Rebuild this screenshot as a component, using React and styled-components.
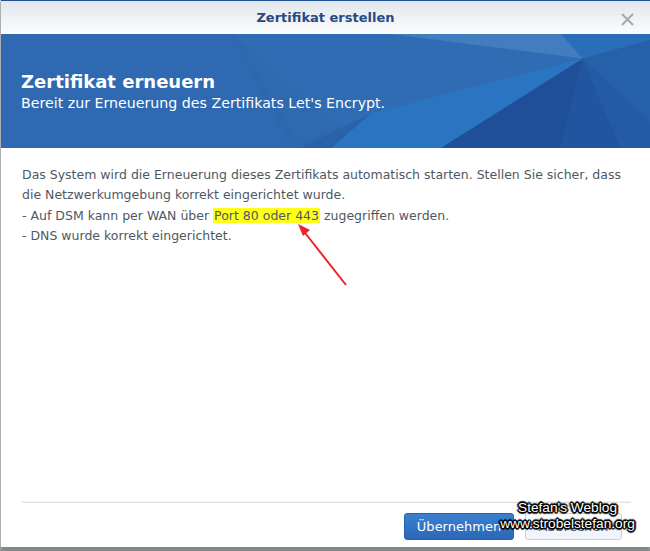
import styled, { createGlobalStyle } from "styled-components";

const GlobalStyle = createGlobalStyle`
  html, body {
    margin: 0;
    padding: 0;
    background: #9da1a6;
    overflow: hidden;
  }
  #root {
    width: 650px;
    height: 551px;
  }
`;

const uiFont = `"DejaVu Sans", Verdana, sans-serif`;

const Page = styled.div`
  width: 650px;
  height: 551px;
  padding-left: 1px;
  box-sizing: border-box;
  background: linear-gradient(to bottom, #c9ccd0 0, #c9ccd0 545px, #8d9196 551px);
`;

const Dialog = styled.div`
  position: relative;
  width: 649px;
  height: 547px;
  background: #fff;
  display: flex;
  flex-direction: column;
  box-shadow: 0 2px 4px rgba(0, 0, 0, 0.35);
  font-family: ${uiFont};
`;

const TitleBar = styled.div`
  height: 33px;
  flex: none;
  border-top: 1px solid #1f5190;
  background: linear-gradient(to bottom, #e1e7ee, #fbfcfd);
  display: flex;
  align-items: center;
  justify-content: center;
  position: relative;
`;

const TitleText = styled.div`
  font-size: 13px;
  font-weight: bold;
  color: #264a7e;
`;

const CloseButton = styled.div`
  position: absolute;
  right: 16px;
  top: 10px;
  width: 13px;
  height: 13px;
`;

const Banner = styled.div`
  position: relative;
  height: 112px;
  flex: none;
  background: #2e69b1;
  overflow: hidden;
  display: flex;
  flex-direction: column;
  justify-content: center;
  padding: 2px 16px 0 20px;
  color: #fff;
`;

const BannerArt = styled.svg`
  position: absolute;
  inset: 0;
  width: 100%;
  height: 100%;
`;

const BannerTitle = styled.div`
  position: relative;
  font-size: 18px;
  font-weight: bold;
  line-height: 22px;
`;

const BannerSub = styled.div`
  position: relative;
  font-size: 14.2px;
  line-height: 20px;
`;

const Body = styled.div`
  flex: 1;
  padding: 17px 21px 0;
  font-size: 12.5px;
  line-height: 20.3px;
  color: #4e5863;
`;

const Line = styled.div`
  white-space: nowrap;
`;

const Mark = styled.span`
  background: #ffff1a;
  padding: 0 1px;
`;

const Footer = styled.div`
  flex: none;
  margin: 0 19px 0 21px;
  border-top: 1px solid #e2e2e2;
  box-shadow: 0 -1px 0 #f2f2f2;
  height: 34px;
  display: flex;
  justify-content: flex-end;
  align-items: flex-start;
  gap: 11px;
  padding-top: 10px;
  padding-right: 9px;
`;

const Button = styled.button`
  height: 27px;
  width: ${({ $w }) => $w}px;
  border-radius: 3px;
  font-family: ${uiFont};
  font-size: 13px;
  padding: 0;
  border: 1px solid ${({ $primary }) => ($primary ? "#2761aa" : "#c3d2e2")};
  color: ${({ $primary }) => ($primary ? "#fff" : "#3f5f8a")};
  background: ${({ $primary }) =>
    $primary
      ? "linear-gradient(to bottom, #3b80d0, #2b67b6)"
      : "linear-gradient(to bottom, #fbfcfe, #eef3f9)"};
`;

const Watermark = styled.div`
  position: absolute;
  left: 497px;
  top: 500px;
  width: 139px;
  text-align: center;
  font-family: "Liberation Sans", Arial, sans-serif;
  font-size: 13.7px;
  line-height: 16px;
  color: #fff;
  text-shadow: -1px -1px 0 #000, 1px -1px 0 #000, -1px 1px 0 #000, 1px 1px 0 #000,
    0 -2px 1px #000, 0 2px 1px #000, -2px 0 1px #000, 2px 0 1px #000;
`;

const Arrow = styled.svg`
  position: absolute;
  left: 285px;
  top: 215px;
  width: 70px;
  height: 80px;
  overflow: visible;
`;

export default function App() {
  return (
    <>
      <GlobalStyle />
      <Page>
        <Dialog>
          <TitleBar>
            <TitleText>Zertifikat erstellen</TitleText>
            <CloseButton>
              <svg width="13" height="13" viewBox="0 0 13 13">
                <path d="M1 1 L12 12 M12 1 L1 12" stroke="#a4a8ad" strokeWidth="2" />
              </svg>
            </CloseButton>
          </TitleBar>
          <Banner>
            <BannerArt viewBox="0 0 649 112" preserveAspectRatio="none">
              <polygon points="232,0 420,0 582,24 370,78 290,112 300,112" fill="#3a78bd" opacity="0.2" />
              <polygon points="232,0 290,112 360,112" fill="#2a62aa" opacity="0.25" />
              <polygon points="390,0 582,24 560,0" fill="#4a86c4" opacity="0.7" />
              <polygon points="560,0 649,0 649,6 582,24" fill="#2a6db8" />
              <polygon points="582,24 649,6 649,86" fill="#2560a8" />
              <polygon points="370,78 582,24 440,112 330,112" fill="#2a7ac8" opacity="0.7" />
              <polygon points="582,24 440,112 560,112" fill="#1f4f98" />
              <polygon points="582,24 560,112 620,112" fill="#2255a0" />
              <polygon points="582,24 649,86 649,112 620,112" fill="#255ba6" />
              <polygon points="300,112 370,78 330,112" fill="#285ea6" opacity="0.6" />
            </BannerArt>
            <BannerTitle>Zertifikat erneuern</BannerTitle>
            <BannerSub>Bereit zur Erneuerung des Zertifikats Let's Encrypt.</BannerSub>
          </Banner>
          <Body>
            <Line>
              Das System wird die Erneuerung dieses Zertifikats automatisch starten. Stellen Sie sicher, dass
            </Line>
            <Line>die Netzwerkumgebung korrekt eingerichtet wurde.</Line>
            <Line>
              - Auf DSM kann per WAN über <Mark>Port 80 oder 443</Mark> zugegriffen werden.
            </Line>
            <Line>- DNS wurde korrekt eingerichtet.</Line>
          </Body>
          <Footer>
            <Button $primary $w={110}>Übernehmen</Button>
            <Button $w={97}>Abbrechen</Button>
          </Footer>
          <Arrow viewBox="0 0 70 80">
            <line x1="60" y1="70" x2="16" y2="14" stroke="#e8262a" strokeWidth="2" />
            <polygon points="12,9 24,15 17,21" fill="#e8262a" />
          </Arrow>
          <Watermark>
            Stefan's Weblog
            <br />
            www.strobelstefan.org
          </Watermark>
        </Dialog>
      </Page>
    </>
  );
}
